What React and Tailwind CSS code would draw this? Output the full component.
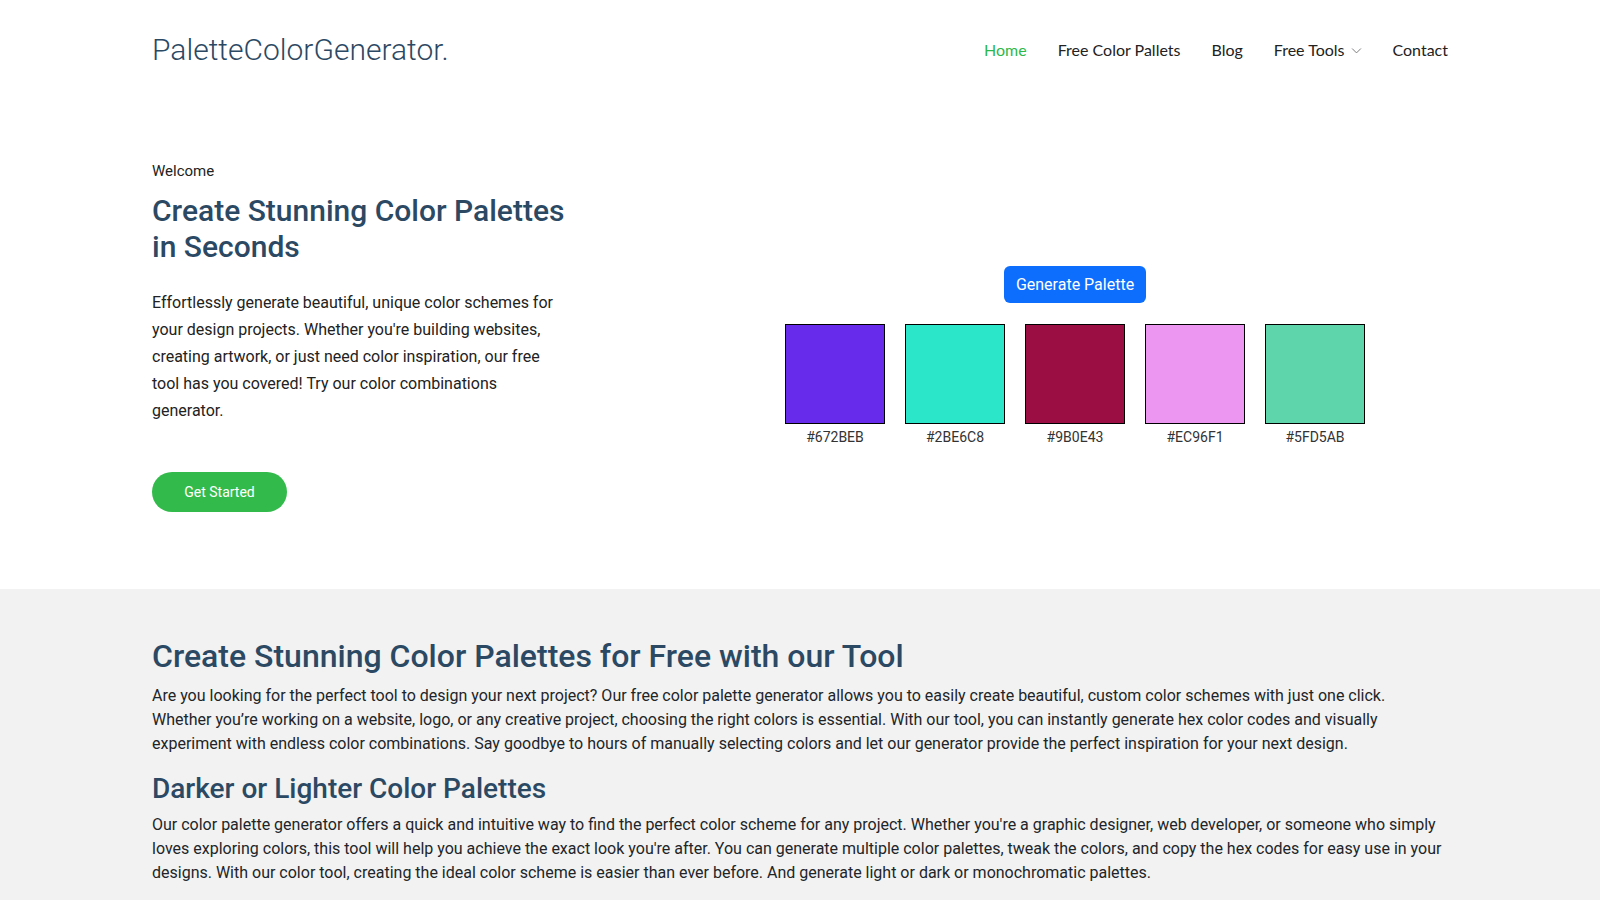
import React from "react";

const swatches = ["#672BEB", "#2BE6C8", "#9B0E43", "#EC96F1", "#5FD5AB"];

function Chevron() {
  return (
    <svg width="11" height="11" viewBox="0 0 16 16" fill="none" className="ml-[6px] mt-[1px]">
      <path d="M2 5.5l6 6 6-6" stroke="#777" strokeWidth="1.4" strokeLinecap="round" strokeLinejoin="round" />
    </svg>
  );
}

export default function App() {
  const roboto = { fontFamily: "Roboto, 'Liberation Sans', sans-serif" };
  return (
    <div className="min-h-[900px] bg-white" style={roboto}>
      <header className="mx-auto w-[1320px] px-3 h-[100px] flex items-center justify-between">
        <a className="text-[30px] font-light text-[#2c4964] -mt-[1px]" style={roboto}>
          PaletteColorGenerator.
        </a>
        <nav className="flex items-center gap-[31px] text-[16px] text-[#222]" style={{ fontFamily: "Lato, 'Liberation Sans', sans-serif" }}>
          <a className="text-[#2db84c]">Home</a>
          <a>Free Color Pallets</a>
          <a>Blog</a>
          <a className="flex items-center">Free Tools<Chevron /></a>
          <a>Contact</a>
        </nav>
      </header>

      <section className="bg-white">
        <div className="mx-auto w-[1320px] flex pt-[60px] pb-[77px]">
          <div className="w-[550px] px-3">
            <div className="max-w-[415px]">
              <p className="text-[15px] leading-[22px] text-[#222]">Welcome</p>
              <h1 className="mt-[11px] text-[30px] leading-[36px] font-medium text-[#2c4964]">
                Create Stunning Color Palettes in Seconds
              </h1>
              <p className="mt-[24px] text-[16px] leading-[27px] text-[#222]">
                Effortlessly generate beautiful, unique color schemes for your design projects. Whether you're building websites, creating artwork, or just need color inspiration, our free tool has you covered! Try our color combinations generator.
              </p>
              <button className="mt-[48px] h-[40px] w-[135px] rounded-full bg-[#32bb4b] text-white text-[14px] flex items-center justify-center">
                Get Started
              </button>
            </div>
          </div>
          <div className="flex-1 px-3 pt-[106px] flex flex-col items-center">
            <button className="h-[37px] px-[12px] rounded-[6px] bg-[#0d6efd] text-white text-[16px] flex items-center justify-center">
              Generate Palette
            </button>
            <div className="mt-[21px] flex">
              {swatches.map((c) => (
                <div key={c} className="mx-[10px] flex flex-col items-center">
                  <div className="w-[100px] h-[100px] border border-black" style={{ backgroundColor: c }} />
                  <span className="mt-[3px] text-[14px] leading-[20px] text-[#333]">{c}</span>
                </div>
              ))}
            </div>
          </div>
        </div>
      </section>

      <section className="bg-[#f2f2f2] min-h-[400px]">
        <div className="mx-auto w-[1320px] px-3 pt-[48px] pb-[40px] text-[#212529]">
          <h2 className="text-[32px] leading-[38px] font-medium text-[#2c4964] mb-[9px]">
            Create Stunning Color Palettes for Free with our Tool
          </h2>
          <p className="text-[16px] leading-[24px] mb-[16px]">
            Are you looking for the perfect tool to design your next project? Our free color palette generator allows you to easily create beautiful, custom color schemes with just one click. Whether you’re working on a website, logo, or any creative project, choosing the right colors is essential. With our tool, you can instantly generate hex color codes and visually experiment with endless color combinations. Say goodbye to hours of manually selecting colors and let our generator provide the perfect inspiration for your next design.
          </p>
          <h3 className="text-[28px] leading-[34px] font-medium text-[#2c4964] mb-[7px]">
            Darker or Lighter Color Palettes
          </h3>
          <p className="text-[16px] leading-[24px] mb-[16px]">
            Our color palette generator offers a quick and intuitive way to find the perfect color scheme for any project. Whether you're a graphic designer, web developer, or someone who simply loves exploring colors, this tool will help you achieve the exact look you're after. You can generate multiple color palettes, tweak the colors, and copy the hex codes for easy use in your designs. With our color tool, creating the ideal color scheme is easier than ever before. And generate light or dark or monochromatic palettes.
          </p>
        </div>
      </section>
    </div>
  );
}
